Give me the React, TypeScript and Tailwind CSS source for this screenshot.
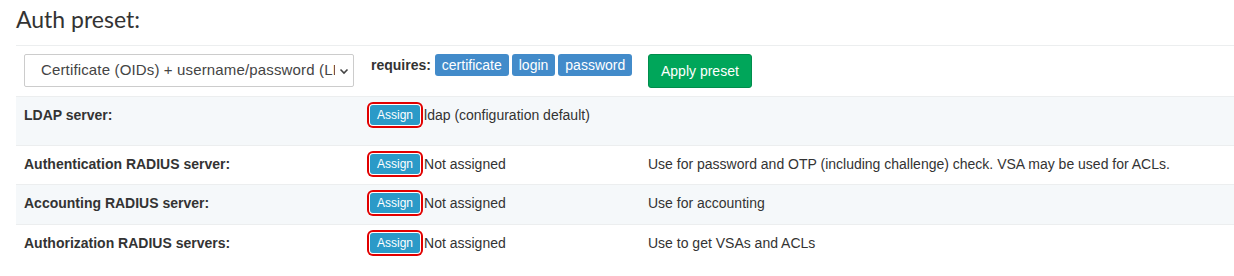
import React from 'react';

type Row = {
    label: string;
    value: string;
    note: string;
    height: string;
    striped: boolean;
};

const rows: Row[] = [
    { label: 'LDAP server:', value: 'ldap (configuration default)', note: '', height: 'h-[49px]', striped: true },
    {
        label: 'Authentication RADIUS server:',
        value: 'Not assigned',
        note: 'Use for password and OTP (including challenge) check. VSA may be used for ACLs.',
        height: 'h-[39px]',
        striped: false,
    },
    { label: 'Accounting RADIUS server:', value: 'Not assigned', note: 'Use for accounting', height: 'h-[40px]', striped: true },
    { label: 'Authorization RADIUS servers:', value: 'Not assigned', note: 'Use to get VSAs and ACLs', height: 'h-[40px]', striped: false },
];

const tags = ['certificate', 'login', 'password'];

export default function App() {
    return (
        <div className="pl-4 bg-white text-[#333] font-['Liberation_Sans',Arial,sans-serif] text-[14px] leading-[20px]">
            {/* Title */}
            <h2 className="pt-[6px] mb-[12px] text-[23px] leading-[27px] font-['Lato','Open_Sans',sans-serif] text-[#333]">
                Auth preset:
            </h2>

            {/* Preset row */}
            <div className="grid grid-cols-[346px_278px_1fr] h-[51px] border-t border-[#eceeef]">
                <div className="pl-2 pt-2">
                    <div className="relative w-[330px] h-[33px] border border-[#ccc] rounded-[2px] bg-white">
                        <div className="absolute left-4 right-[18px] top-[5px] overflow-hidden whitespace-nowrap text-[15px] tracking-[0.15px] text-[#444]">
                            Certificate (OIDs) + username/password (LDAP)
                        </div>
                        <svg className="absolute right-[4px] top-[13px]" width="10" height="7" viewBox="0 0 10 7">
                            <polyline points="1.5,1.5 5,5 8.5,1.5" fill="none" stroke="#444" strokeWidth="1.6" />
                        </svg>
                    </div>
                </div>
                <div className="pl-[9px] pt-2 whitespace-nowrap">
                    <b className="font-bold">requires:</b>{' '}
                    {tags.map((t) => (
                        <span key={t} className="inline-block mr-[3px] px-[7px] py-[1px] rounded-[3px] bg-[#428bca] text-white">
                            {t}
                        </span>
                    ))}
                </div>
                <div className="pl-2 pt-2">
                    <button className="h-[34px] px-3 border border-[#008d4c] rounded-[3px] bg-[#00a65a] text-white">
                        Apply preset
                    </button>
                </div>
            </div>

            {/* Server rows */}
            {rows.map((r) => (
                <div
                    key={r.label}
                    className={`grid grid-cols-[346px_278px_1fr] ${r.height} border-t border-[#eceeef] ${r.striped ? 'bg-[#f5f8fa]' : 'bg-white'}`}
                >
                    <div className="pl-2 pt-2 font-bold">{r.label}</div>
                    <div className="pl-2 pt-2 whitespace-nowrap">
                        <button className="inline-block align-top px-[7px] h-[20px] text-[12px] leading-[20px] rounded-[3px] bg-[#2b9ac8] text-white shadow-[0_0_0_1px_#fff,0_0_0_3px_#e10000]">
                            Assign
                        </button>
                        <span className="ml-[4px]">{r.value}</span>
                    </div>
                    <div className="pl-2 pt-2 whitespace-nowrap">{r.note}</div>
                </div>
            ))}
        </div>
    );
}
